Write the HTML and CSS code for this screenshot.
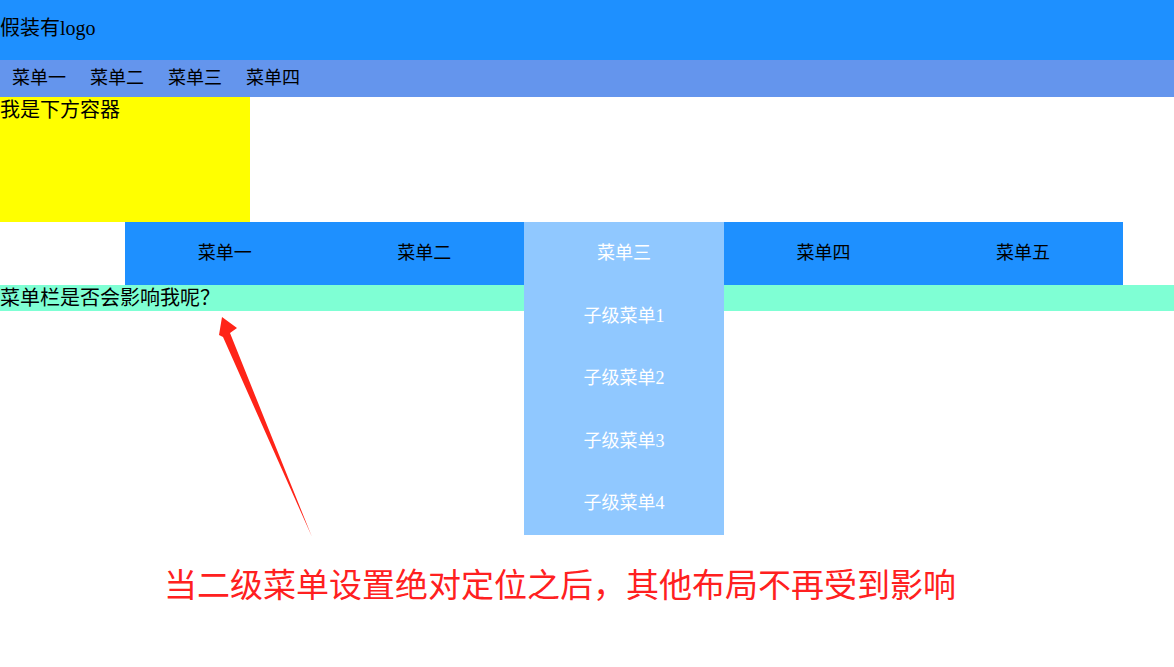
FILE: index.html
```html
<!DOCTYPE html>
<html lang="zh-CN">
<head>
    <meta charset="UTF-8">
    <meta name="viewport" content="width=device-width, initial-scale=1.0">
    <title>二级菜单定位</title>
    <link rel="stylesheet" href="styles.css">
</head>
<body>

<div class="header">假装有logo</div>
<ul class="nav">
    <li>菜单一</li>
    <li>菜单二</li>
    <li>菜单三</li>
    <li>菜单四</li>
</ul>
<div class="box">我是下方容器</div>

<ul class="menu">
    <li>菜单一</li>
    <li>菜单二</li>
    <li class="active">菜单三
        <!-- 二级菜单：绝对定位，不占文档流 -->
        <ul class="submenu">
            <li>子级菜单1</li>
            <li>子级菜单2</li>
            <li>子级菜单3</li>
            <li>子级菜单4</li>
        </ul>
    </li>
    <li>菜单四</li>
    <li>菜单五</li>
</ul>
<div class="below">菜单栏是否会影响我呢？</div>

<!-- 标注 -->
<svg class="arrow" width="1174" height="667" viewBox="0 0 1174 667">
    <polygon points="222,317 237,328 230,333 312,537 223,337 219,335" fill="#ff2418"/>
</svg>
<p class="tip">当二级菜单设置绝对定位之后，其他布局不再受到影响</p>

</body>
</html>
```

FILE: styles.css
```css
html, body {
    overflow: visible;
}
body {
    margin: 0;
    min-height: 100vh;
    font-family: "Liberation Serif", "Noto Sans CJK SC", serif;
    font-size: 20px;
    color: #000;
}
ul {
    list-style: none;
    margin: 0;
    padding: 0;
}
.header {
    height: 60px;
    line-height: 56px;
    background-color: #1e90ff;
}
.nav {
    display: flex;
    height: 37px;
    line-height: 37px;
    font-size: 18px;
    background-color: #6495ed;
}
.nav li {
    padding: 0 12px;
}
.box {
    width: 250px;
    height: 125px;
    line-height: 26px;
    background-color: #ffff00;
}
.menu {
    display: flex;
    width: 85%;
    height: 63px;
    margin-left: 125px;
    font-size: 18px;
    background-color: #1e90ff;
}
.menu > li {
    flex: 1;
    position: relative;
    text-align: center;
    line-height: 62.5px;
}
.menu > li.active {
    background-color: #90c8ff;
    color: #fff;
}
.submenu {
    position: absolute;
    top: 63px;
    left: 0;
    z-index: 10;
    width: 100%;
    background-color: #90c8ff;
}
.submenu li {
    height: 62.4px;
    line-height: 62.4px;
}
.below {
    height: 26px;
    line-height: 26px;
    background-color: #7fffd4;
}
.arrow {
    position: absolute;
    top: 0;
    left: 0;
    pointer-events: none;
}
.tip {
    position: absolute;
    top: 560px;
    left: 164px;
    margin: 0;
    font-family: "Noto Sans CJK SC", sans-serif;
    font-size: 33px;
    font-weight: 400;
    line-height: 46px;
    color: #ff2020;
}
```
